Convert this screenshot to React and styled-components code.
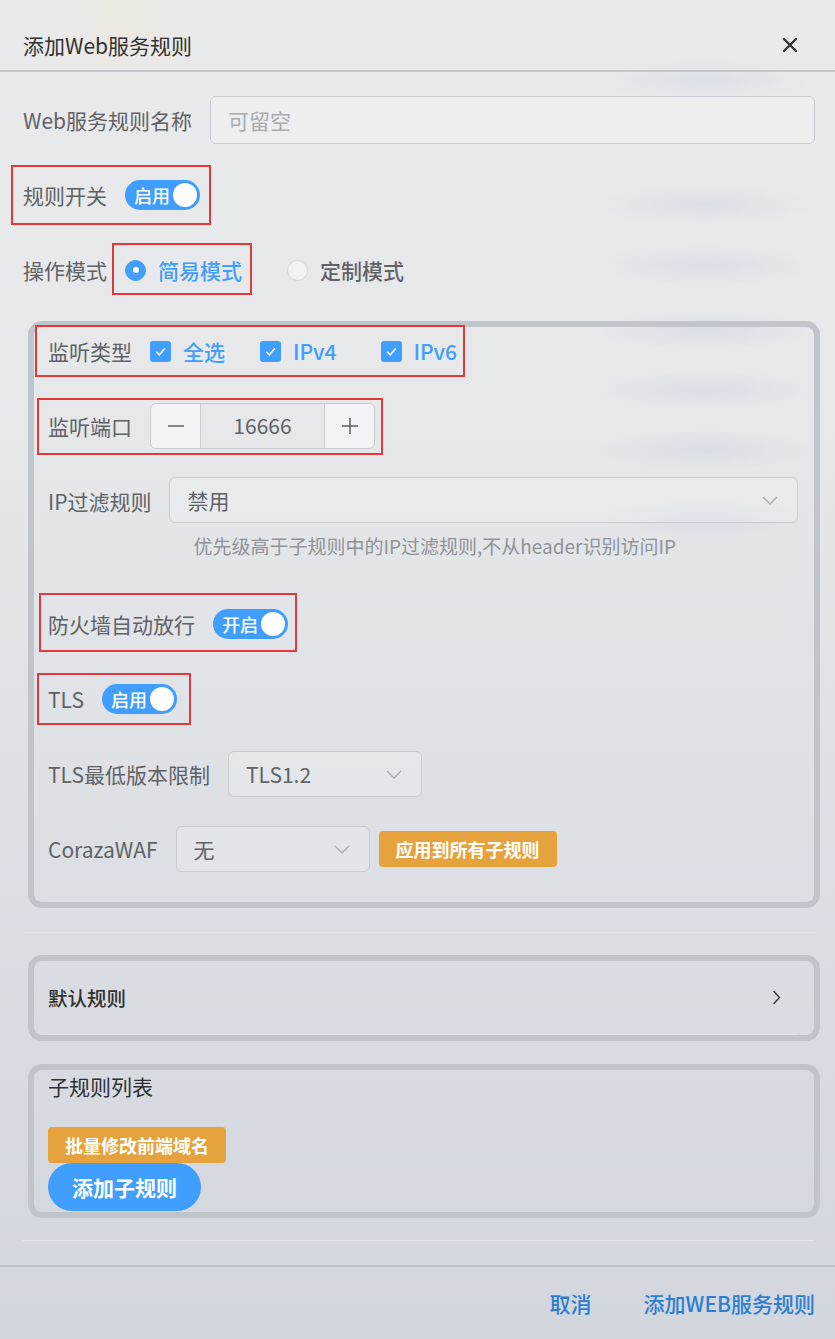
import styled, {createGlobalStyle} from 'styled-components'

const bands = [80, 205, 265, 330, 390, 450, 520]
  .map(
    y =>
      `radial-gradient(ellipse 110px 20px at 705px ${y}px, rgba(200, 210, 226, 0.4), rgba(200, 210, 226, 0) 100%)`,
  )
  .join(', ')

const GlobalStyle = createGlobalStyle`
  html, body {
    margin: 0;
    padding: 0;
  }
  body {
    font-family: "Noto Sans CJK SC", "Noto Sans", sans-serif;
    color: #606266;
    background-color: #dfe2e6;
    background-image: ${bands},
      radial-gradient(circle 90px at 120px 15px, rgba(240, 232, 214, 0.5), rgba(240, 232, 214, 0) 100%),
      linear-gradient(180deg, #e9eaeb 0%, #e6e8ea 30%, #dde1e6 60%, #d2d6dd 100%);
    background-repeat: no-repeat;
    min-height: 1339px;
  }
`

const Page = styled.div`
  width: 835px;
  height: 1339px;
  display: flex;
  flex-direction: column;
  box-sizing: border-box;
`

const Header = styled.div`
  height: 73px;
  box-sizing: border-box;
  padding: 20px 37px 0 23px;
  display: flex;
  align-items: center;
  justify-content: space-between;
  border-bottom: 2px solid #c5c7cb;
`

const Title = styled.div`
  font-size: 21px;
  line-height: 30px;
  color: #303133;
`

const CloseBtn = styled.button`
  border: none;
  background: none;
  padding: 0;
  width: 16px;
  height: 16px;
  display: flex;
  cursor: pointer;
`

const Body = styled.div`
  flex: 1;
  padding: 24px 20px 0 23px;
`

const FormItem = styled.div`
  display: flex;
  align-items: flex-start;
  margin-bottom: 27px;
`

const Label = styled.label`
  flex: none;
  font-size: 21px;
  line-height: 48px;
  color: #606266;
  padding-right: 18px;
  white-space: nowrap;
`

const Content = styled.div`
  flex: 1;
  min-height: 48px;
  display: flex;
  align-items: center;
  flex-wrap: wrap;
`

// red annotation frame: drawn around its content without moving it
const Marked = styled.div`
  display: flex;
  align-items: center;
  border: 2px solid #e4393c;
  margin: ${p => `-${p.$t}px -${p.$r}px -${p.$b}px -${p.$l}px`};
  padding: ${p => `${p.$t - 2}px ${p.$r - 2}px ${p.$b - 2}px ${p.$l - 2}px`};
`

const TextInput = styled.input`
  width: 100%;
  height: 48px;
  box-sizing: border-box;
  border: 1.5px solid #c9ccd1;
  border-radius: 6px;
  background: rgba(255, 255, 255, 0.22);
  padding: 0 17px;
  font-family: inherit;
  font-size: 21px;
  color: #606266;
  outline: none;
  &::placeholder {
    color: #a8abb2;
  }
`

const SwitchTrack = styled.span`
  width: 75px;
  height: 30px;
  border-radius: 15px;
  background: #409eff;
  display: flex;
  align-items: center;
  justify-content: space-between;
  box-sizing: border-box;
  padding: 0 3px 0 9px;
  color: #fff;
  font-size: 18px;
  font-weight: 500;
  line-height: 30px;
`

const Knob = styled.span`
  width: 24px;
  height: 24px;
  border-radius: 50%;
  background: #fff;
`

const Switch = ({text}) => (
  <SwitchTrack>
    {text}
    <Knob />
  </SwitchTrack>
)

const RadioItem = styled.span`
  display: flex;
  align-items: center;
  gap: 12px;
  margin-left: ${p => p.$ml || 0}px;
  font-size: 21px;
  line-height: 30px;
  font-weight: 500;
  color: ${p => (p.$checked ? '#409eff' : '#606266')};
`

const RadioDot = styled.span`
  width: 21px;
  height: 21px;
  box-sizing: border-box;
  border-radius: 50%;
  border: 1.5px solid ${p => (p.$checked ? '#409eff' : '#d3d6db')};
  background: ${p => (p.$checked ? '#409eff' : 'rgba(255,255,255,0.45)')};
  display: flex;
  align-items: center;
  justify-content: center;
  &::after {
    content: '';
    width: 6px;
    height: 6px;
    border-radius: 50%;
    background: #fff;
    display: ${p => (p.$checked ? 'block' : 'none')};
  }
`

const CheckItem = styled.span`
  display: flex;
  align-items: center;
  gap: 12px;
  margin-right: ${p => p.$gap}px;
  font-size: 21px;
  line-height: 30px;
  font-weight: 500;
  color: #409eff;
`

const CheckBox = styled.span`
  width: 21px;
  height: 21px;
  border-radius: 3px;
  background: #409eff;
  display: flex;
`

const Check = ({label, gap}) => (
  <CheckItem $gap={gap}>
    <CheckBox>
      <svg width="21" height="21" viewBox="0 0 21 21">
        <path
          d="M6.3 10.8 L9.3 13.8 L14.8 7.6"
          fill="none"
          stroke="#fff"
          strokeWidth="1.5"
        />
      </svg>
    </CheckBox>
    {label}
  </CheckItem>
)

const Card = styled.div`
  border: 6px solid #c0c4cb;
  border-radius: 14px;
  margin: ${p => p.$mt || 0}px -5px 0 5px;
  padding: ${p => p.$pad || '0 16px 0 14px'};
`

const NumberBox = styled.div`
  width: 225px;
  height: 46px;
  box-sizing: border-box;
  border: 1.5px solid #c9ccd1;
  border-radius: 6px;
  display: flex;
  overflow: hidden;
`

const StepBtn = styled.span`
  width: 49px;
  flex: none;
  display: flex;
  align-items: center;
  justify-content: center;
  background: rgba(246, 247, 250, 0.75);
  border-${p => p.$side}: 1.5px solid #c9ccd1;
`

const NumberValue = styled.span`
  flex: 1;
  text-align: center;
  font-size: 21px;
  line-height: 43px;
  color: #606266;
`

const SelectBox = styled.div`
  width: ${p => p.$w || '100%'};
  height: 46px;
  box-sizing: border-box;
  border: 1.5px solid #c9ccd1;
  border-radius: 6px;
  background: rgba(255, 255, 255, 0.18);
  display: flex;
  align-items: center;
  justify-content: space-between;
  padding: 0 19px 0 17px;
  font-size: 21px;
  color: #606266;
`

const Chevron = () => (
  <svg width="16" height="9" viewBox="0 0 16 9">
    <polyline
      points="1,1 8,8 15,1"
      fill="none"
      stroke="#a8abb2"
      strokeWidth="1.3"
    />
  </svg>
)

const Select = ({value, w}) => (
  <SelectBox $w={w}>
    {value}
    <Chevron />
  </SelectBox>
)

const Hint = styled.div`
  width: 100%;
  padding-left: 24px;
  margin: 8px 0 12px;
  font-size: 19px;
  line-height: 30px;
  color: #909399;
`

const SmallButton = styled.button`
  height: 36px;
  border: none;
  border-radius: 4px;
  background: #e6a23c;
  color: #fff;
  font-family: inherit;
  font-size: 18px;
  font-weight: 700;
  padding: 0 17px;
  margin-left: ${p => p.$ml || 0}px;
  cursor: pointer;
`

const RoundButton = styled.button`
  height: 48px;
  border: none;
  border-radius: 24px;
  background: #409eff;
  color: #fff;
  font-family: inherit;
  font-size: 21px;
  font-weight: 700;
  padding: 0 24px;
  cursor: pointer;
`

const Divider = styled.div`
  height: 1px;
  background: #e3e6ea;
  margin: ${p => p.$m};
`

const CollapseHead = styled.div`
  height: 73px;
  border-bottom: 1px solid #e2e5ea;
  margin-right: 16px;
  display: flex;
  align-items: center;
  justify-content: space-between;
  padding-right: 17px;
  font-size: 19.5px;
  font-weight: 500;
  color: #303133;
`

const SubTitle = styled.div`
  font-size: 21px;
  line-height: 32px;
  color: #303133;
  margin-bottom: 25px;
`

const ButtonStack = styled.div`
  display: flex;
  flex-direction: column;
  align-items: flex-start;
  padding-bottom: 1px;
`

const Footer = styled.div`
  height: 75px;
  box-sizing: border-box;
  border-top: 2px solid #c0c3c8;
  display: flex;
  align-items: center;
  justify-content: flex-end;
  gap: 52px;
  padding: 0 20px 0 0;
`

const TextButton = styled.button`
  border: none;
  background: none;
  padding: 0;
  font-family: inherit;
  font-size: 21px;
  font-weight: 500;
  color: #2d7dd2;
  cursor: pointer;
`

export default function App() {
  return (
    <>
      <GlobalStyle />
      <Page>
        <Header>
          <Title>添加Web服务规则</Title>
          <CloseBtn type="button" aria-label="close">
            <svg width="16" height="16" viewBox="0 0 16 16">
              <path
                d="M2 2 L14 14 M14 2 L2 14"
                stroke="#303133"
                strokeWidth="2.3"
                strokeLinecap="round"
              />
            </svg>
          </CloseBtn>
        </Header>

        <Body>
          <FormItem>
            <Label>Web服务规则名称</Label>
            <Content>
              <TextInput placeholder="可留空" />
            </Content>
          </FormItem>

          <FormItem>
            <Marked $t={6} $r={11} $b={6} $l={12}>
              <Label>规则开关</Label>
              <Switch text="启用" />
            </Marked>
          </FormItem>

          <FormItem>
            <Label>操作模式</Label>
            <Content>
              <Marked $t={12} $r={10} $b={10} $l={13}>
                <RadioItem $checked>
                  <RadioDot $checked />
                  简易模式
                </RadioItem>
              </Marked>
              <RadioItem $ml={45}>
                <RadioDot />
                定制模式
              </RadioItem>
            </Content>
          </FormItem>

          <Card $pad="0 16px 2px 14px">
            <FormItem>
              <Marked $t={2} $r={8} $b={2} $l={13}>
                <Label>监听类型</Label>
                <Check label="全选" gap={35} />
                <Check label="IPv4" gap={44} />
                <Check label="IPv6" gap={0} />
              </Marked>
            </FormItem>

            <FormItem>
              <Marked $t={4} $r={8} $b={5} $l={11}>
                <Label>监听端口</Label>
                <NumberBox>
                  <StepBtn $side="right">
                    <svg width="18" height="18" viewBox="0 0 18 18">
                      <path d="M1 9 H17" stroke="#606266" strokeWidth="1.5" />
                    </svg>
                  </StepBtn>
                  <NumberValue>16666</NumberValue>
                  <StepBtn $side="left">
                    <svg width="18" height="18" viewBox="0 0 18 18">
                      <path
                        d="M1 9 H17 M9 1 V17"
                        stroke="#606266"
                        strokeWidth="1.5"
                      />
                    </svg>
                  </StepBtn>
                </NumberBox>
              </Marked>
            </FormItem>

            <FormItem>
              <Label>IP过滤规则</Label>
              <Content>
                <Select value="禁用" />
                <Hint>优先级高于子规则中的IP过滤规则,不从header识别访问IP</Hint>
              </Content>
            </FormItem>

            <FormItem>
              <Marked $t={7} $r={9} $b={4} $l={9}>
                <Label>防火墙自动放行</Label>
                <Switch text="开启" />
              </Marked>
            </FormItem>

            <FormItem>
              <Marked $t={2} $r={14} $b={2} $l={11}>
                <Label>TLS</Label>
                <Switch text="启用" />
              </Marked>
            </FormItem>

            <FormItem>
              <Label>TLS最低版本限制</Label>
              <Content>
                <Select value="TLS1.2" w="194px" />
              </Content>
            </FormItem>

            <FormItem>
              <Label>CorazaWAF</Label>
              <Content>
                <Select value="无" w="194px" />
                <SmallButton type="button" $ml={9}>
                  应用到所有子规则
                </SmallButton>
              </Content>
            </FormItem>
          </Card>

          <Divider $m="24px 0 22px" />

          <Card $pad="0 0 0 14px">
            <CollapseHead>
              默认规则
              <svg width="9" height="15" viewBox="0 0 9 15">
                <polyline
                  points="1.5,1 7.5,7.5 1.5,14"
                  fill="none"
                  stroke="#303133"
                  strokeWidth="1.3"
                />
              </svg>
            </CollapseHead>
          </Card>

          <Card $mt={23}>
            <SubTitle>子规则列表</SubTitle>
            <ButtonStack>
              <SmallButton type="button">批量修改前端域名</SmallButton>
              <RoundButton type="button">添加子规则</RoundButton>
            </ButtonStack>
          </Card>

          <Divider $m="22px 0 24px" />
        </Body>

        <Footer>
          <TextButton type="button">取消</TextButton>
          <TextButton type="button">添加WEB服务规则</TextButton>
        </Footer>
      </Page>
    </>
  )
}
